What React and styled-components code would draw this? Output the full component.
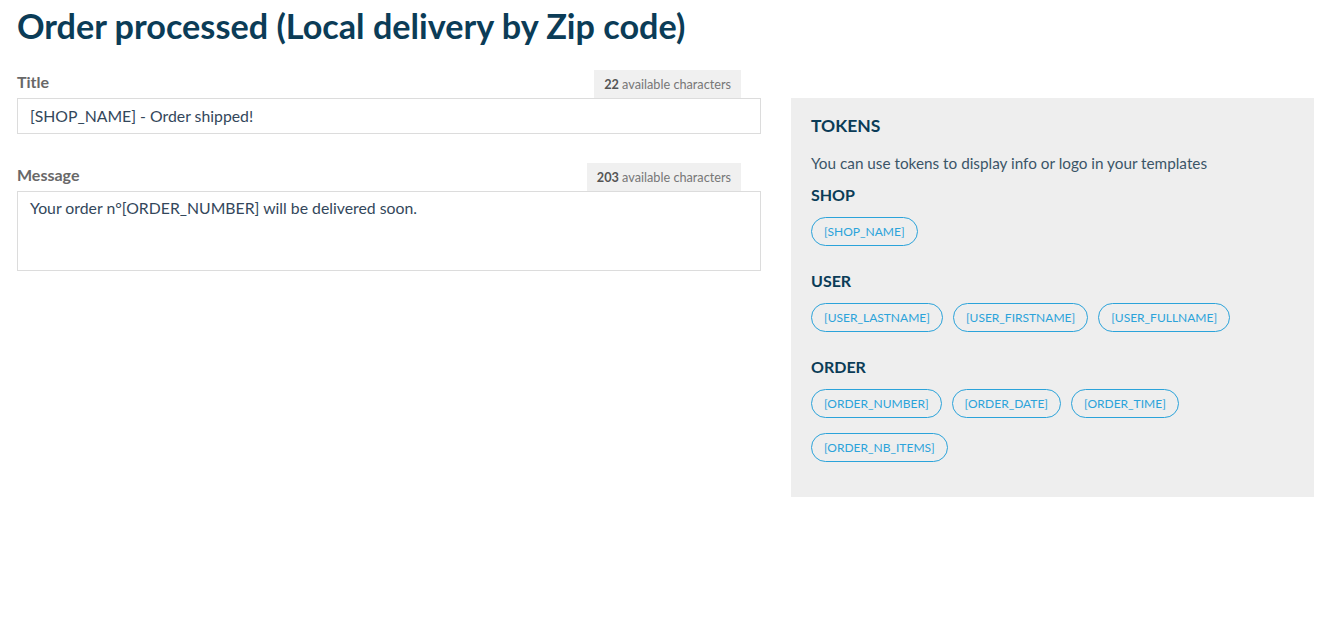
import React from "react";
import styled, { createGlobalStyle } from "styled-components";

const Global = createGlobalStyle`
  html, body { margin: 0; padding: 0; background: #fff; }
  body { font-family: Lato, "Open Sans", sans-serif; }
  * { box-sizing: border-box; }
`;

const Page = styled.div`
  padding: 5px 15px 0 17px;
`;

const Heading = styled.h1`
  margin: 0 0 24px;
  font-size: 34.2px;
  line-height: 41px;
  font-weight: 700;
  color: #0b3c57;
`;

const Columns = styled.div`
  display: grid;
  grid-template-columns: 1fr 523px;
  column-gap: 30px;
  align-items: start;
`;

const Form = styled.div`
  display: flex;
  flex-direction: column;
`;

const Field = styled.div`
  margin-bottom: 29px;
`;

const LabelRow = styled.div`
  display: flex;
  justify-content: space-between;
  align-items: flex-start;
  height: 28px;
  padding-right: 20px;
`;

const Label = styled.label`
  padding-top: 2px;
  font-size: 16px;
  line-height: 20px;
  font-weight: 700;
  color: #686868;
`;

const Counter = styled.span`
  background: #f0f0f0;
  padding: 0 10px;
  height: 28px;
  line-height: 28px;
  font-size: 12.7px;
  color: #777;
  b { color: #555; font-weight: 700; }
`;

const Box = styled.div`
  border: 1px solid #dcdcdc;
  background: #fff;
  padding: ${(p) => (p.$multi ? "5px 12px" : "0 12px")};
  height: ${(p) => (p.$multi ? "80px" : "36px")};
  line-height: ${(p) => (p.$multi ? "22px" : "34px")};
  font-size: 15.8px;
  color: #33475b;
`;

const Panel = styled.aside`
  margin-top: 28px;
  background: #eeeeee;
  padding: 18px 20px 35px;
`;

const PanelTitle = styled.h2`
  margin: 0 0 15px;
  font-size: 17.5px;
  line-height: 20px;
  font-weight: 700;
  color: #0b3c57;
`;

const Desc = styled.p`
  margin: 0 0 10px;
  font-size: 15.3px;
  line-height: 24px;
  color: #3b5568;
`;

const Group = styled.div`
  & + & { margin-top: 25px; }
`;

const GroupTitle = styled.h3`
  margin: 0 0 12px;
  font-size: 16px;
  line-height: 20px;
  font-weight: 700;
  color: #0b3c57;
`;

const Pills = styled.div`
  display: flex;
  flex-wrap: wrap;
  gap: 15px 10px;
`;

const Pill = styled.span`
  display: inline-flex;
  align-items: center;
  height: 29px;
  padding: 0 12px;
  border: 1px solid #2ba3da;
  border-radius: 15px;
  font-size: 12px;
  color: #2ba3da;
  background: transparent;
`;

const groups = [
  { name: "SHOP", tokens: ["[SHOP_NAME]"] },
  { name: "USER", tokens: ["[USER_LASTNAME]", "[USER_FIRSTNAME]", "[USER_FULLNAME]"] },
  {
    name: "ORDER",
    tokens: ["[ORDER_NUMBER]", "[ORDER_DATE]", "[ORDER_TIME]", "[ORDER_NB_ITEMS]"],
  },
];

export default function App() {
  return (
    <Page>
      <Global />
      <Heading>Order processed (Local delivery by Zip code)</Heading>
      <Columns>
        <Form>
          <Field>
            <LabelRow>
              <Label>Title</Label>
              <Counter>
                <b>22</b> available characters
              </Counter>
            </LabelRow>
            <Box>[SHOP_NAME] - Order shipped!</Box>
          </Field>
          <Field>
            <LabelRow>
              <Label>Message</Label>
              <Counter>
                <b>203</b> available characters
              </Counter>
            </LabelRow>
            <Box $multi>Your order n°[ORDER_NUMBER] will be delivered soon.</Box>
          </Field>
        </Form>
        <Panel>
          <PanelTitle>TOKENS</PanelTitle>
          <Desc>You can use tokens to display info or logo in your templates</Desc>
          {groups.map((g) => (
            <Group key={g.name}>
              <GroupTitle>{g.name}</GroupTitle>
              <Pills>
                {g.tokens.map((t) => (
                  <Pill key={t}>{t}</Pill>
                ))}
              </Pills>
            </Group>
          ))}
        </Panel>
      </Columns>
    </Page>
  );
}
